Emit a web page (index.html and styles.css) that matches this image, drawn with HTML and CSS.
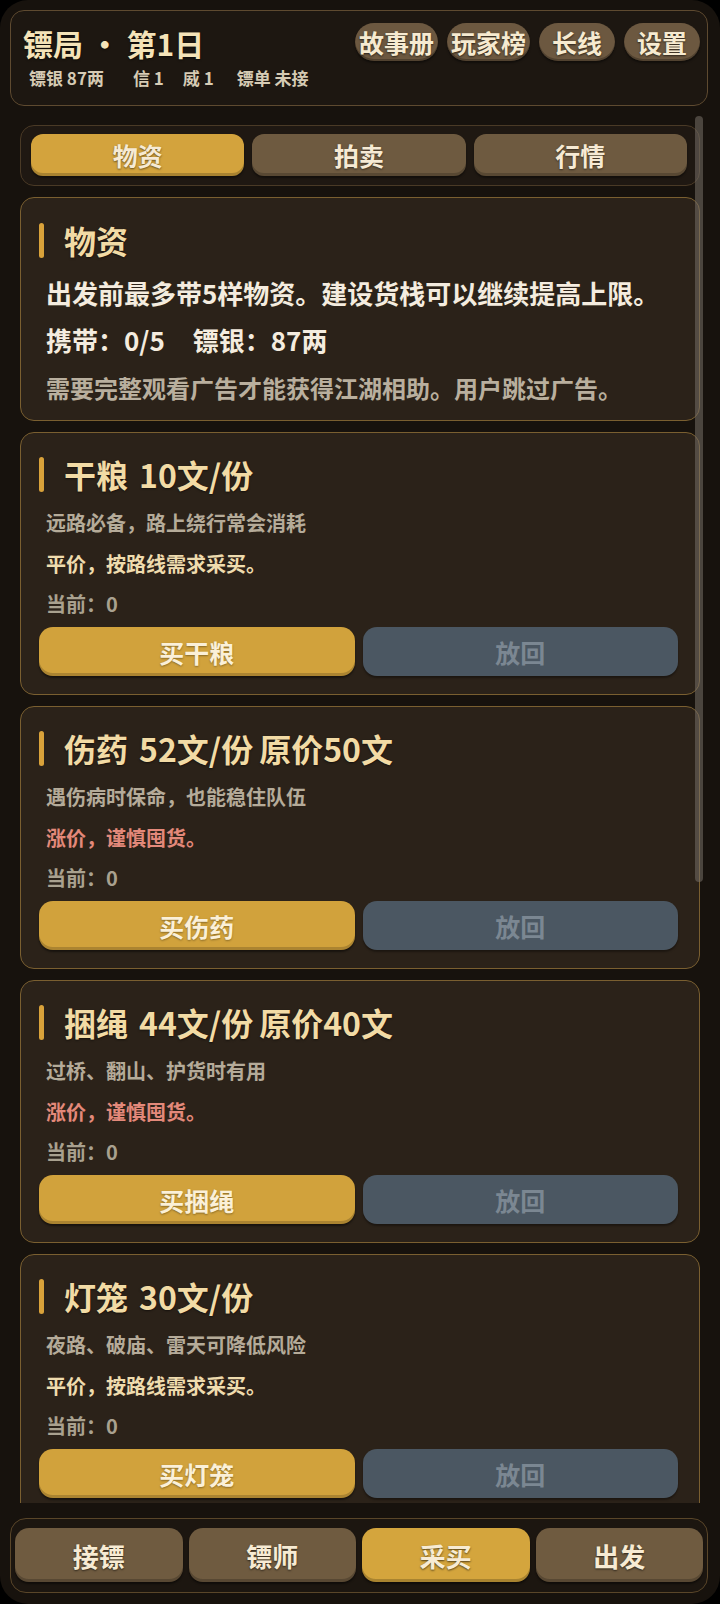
FILE: index.html
```html
<!DOCTYPE html>
<html lang="zh-CN">
<head>
<meta charset="utf-8">
<title>镖局</title>
<link rel="stylesheet" href="styles.css">
</head>
<body>
<div class="app">
  <header class="top">
    <div class="top-left">
      <div class="game-title">镖局 · 第1日</div>
      <div class="stats"><span>镖银 87两</span><span class="g1">信 1</span><span class="g2">威 1</span><span class="g3">镖单 未接</span></div>
    </div>
    <div class="top-actions">
      <button class="pill tight">故事册</button>
      <button class="pill tight">玩家榜</button>
      <button class="pill">长线</button>
      <button class="pill">设置</button>
    </div>
  </header>

  <main class="scroll">
    <div class="scroll-content">
      <nav class="tabs">
        <button class="tab active">物资</button>
        <button class="tab">拍卖</button>
        <button class="tab">行情</button>
      </nav>

      <section class="card intro">
        <div class="card-title"><span class="bar"></span><span>物资</span></div>
        <p class="intro-main">出发前最多带5样物资。建设货栈可以继续提高上限。</p>
        <p class="intro-main intro-row"><span>携带：0/5</span><span class="sep">镖银：87两</span></p>
        <p class="intro-note">需要完整观看广告才能获得江湖相助。用户跳过广告。</p>
      </section>

      <section class="card item">
        <div class="card-title"><span class="bar"></span><span><span>干粮</span><span class="price">10文/份</span></span></div>
        <p class="desc">远路必备，路上绕行常会消耗</p>
        <p class="note">平价，按路线需求采买。</p>
        <p class="cur">当前：0</p>
        <div class="actions"><button class="btn buy">买干粮</button><button class="btn back">放回</button></div>
      </section>

      <section class="card item">
        <div class="card-title"><span class="bar"></span><span><span>伤药</span><span class="price">52文/份</span><span class="orig">原价50文</span></span></div>
        <p class="desc">遇伤病时保命，也能稳住队伍</p>
        <p class="note up">涨价，谨慎囤货。</p>
        <p class="cur">当前：0</p>
        <div class="actions"><button class="btn buy">买伤药</button><button class="btn back">放回</button></div>
      </section>

      <section class="card item">
        <div class="card-title"><span class="bar"></span><span><span>捆绳</span><span class="price">44文/份</span><span class="orig">原价40文</span></span></div>
        <p class="desc">过桥、翻山、护货时有用</p>
        <p class="note up">涨价，谨慎囤货。</p>
        <p class="cur">当前：0</p>
        <div class="actions"><button class="btn buy">买捆绳</button><button class="btn back">放回</button></div>
      </section>

      <section class="card item">
        <div class="card-title"><span class="bar"></span><span><span>灯笼</span><span class="price">30文/份</span></span></div>
        <p class="desc">夜路、破庙、雷天可降低风险</p>
        <p class="note">平价，按路线需求采买。</p>
        <p class="cur">当前：0</p>
        <div class="actions"><button class="btn buy">买灯笼</button><button class="btn back">放回</button></div>
      </section>
    </div>
    <div class="scroll-thumb"></div>
  </main>

  <footer class="bottom-nav">
    <button class="nav-btn">接镖</button>
    <button class="nav-btn">镖师</button>
    <button class="nav-btn active">采买</button>
    <button class="nav-btn">出发</button>
  </footer>
</div>
</body>
</html>
```

FILE: styles.css
```css
* { box-sizing: border-box; margin: 0; padding: 0; }

html, body {
  width: 720px;
  height: 1604px;
  background: #000;
  overflow: hidden;
}

body {
  font-family: "Noto Sans CJK SC", "Noto Sans", sans-serif;
  font-weight: 700;
  color: #f3e6cc;
}

button {
  font-family: inherit;
  font-weight: 700;
  border: none;
  cursor: pointer;
}

.app {
  width: 720px;
  height: 1604px;
  background: #17120d;
  border-radius: 28px;
  display: flex;
  flex-direction: column;
  overflow: hidden;
}

/* ---------- header ---------- */
.top {
  margin: 10px 12px 0 10px;
  height: 96px;
  flex: none;
  border: 1px solid #5e4a30;
  border-radius: 14px;
  background: #1d1711;
  display: flex;
  justify-content: space-between;
  align-items: flex-start;
  padding: 12px 7px 0 12px;
}

.game-title {
  font-size: 30px;
  line-height: 40px;
  color: #f4e3b8;
  text-shadow: 0 1px 2px rgba(0,0,0,.6);
}

.stats {
  margin-top: 3px;
  padding-left: 6px;
  display: flex;
  font-size: 17px;
  line-height: 24px;
  color: #d6cbb4;
}

.stats .g1 { margin-left: 29px; }
.stats .g2 { margin-left: 19px; }
.stats .g3 { margin-left: 23px; }

.top-actions {
  display: flex;
  gap: 9px;
}

.pill {
  height: 38px;
  border-radius: 19px;
  padding: 0 13px;
  background: #6c5840;
  color: #f6ead0;
  font-size: 25px;
  line-height: 38px;
  text-shadow: 0 1px 2px rgba(0,0,0,.6);
  box-shadow: inset 0 -2px 0 rgba(0,0,0,.25), 0 2px 2px rgba(0,0,0,.4);
}

.pill.tight { padding: 0 4px; }

/* ---------- scroll area ---------- */
.scroll {
  flex: 1;
  margin-top: 10px;
  position: relative;
  overflow: hidden;
}

.scroll-content {
  padding: 9px 20px 0 20px;
}

.scroll-thumb {
  position: absolute;
  right: 17px;
  top: 0;
  width: 8px;
  height: 766px;
  border-radius: 4px;
  background: rgba(118, 112, 104, 0.55);
}

/* ---------- tabs ---------- */
.tabs {
  display: flex;
  gap: 8px;
  border: 1px solid #4a3a26;
  border-radius: 14px;
  background: #1f1812;
  padding: 8px 12px 9px 10px;
}

.tab {
  flex: 1;
  height: 42px;
  border-radius: 12px;
  background: #6e5a40;
  color: #f6ead4;
  font-size: 25px;
  text-shadow: 0 1px 2px rgba(0,0,0,.5);
  box-shadow: inset 0 -3px 0 rgba(0,0,0,.2), 0 2px 2px rgba(0,0,0,.4);
}

.tab.active { background: #d3a33d; }

/* ---------- cards ---------- */
.card {
  margin-top: 11px;
  border: 1px solid #7a5f30;
  border-radius: 14px;
  background: #2b2219;
}

.card-title {
  display: flex;
  align-items: center;
  gap: 20px;
  height: 36px;
  font-size: 32px;
  line-height: 36px;
  color: #f2dba5;
  text-shadow: 0 1px 2px rgba(0,0,0,.5);
}

.card-title .price { margin-left: 11px; }
.card-title .orig { margin-left: 6px; }

.bar {
  width: 5px;
  height: 35px;
  border-radius: 3px;
  background: #d9a23a;
  flex: none;
}

.intro {
  padding: 24px 20px 16px 18px;
}

.intro-main {
  margin-top: 18px;
  padding-left: 7px;
  font-size: 26px;
  line-height: 34px;
  color: #f4ecdf;
}

.intro-row {
  margin-top: 13px;
}

.intro-row .sep { margin-left: 28px; }

.intro-note {
  margin-top: 15px;
  padding-left: 7px;
  font-size: 24px;
  line-height: 32px;
  color: #b9af9e;
}

.item {
  padding: 23px 21px 18px 18px;
}

.desc, .note, .cur {
  padding-left: 7px;
  font-size: 20px;
  line-height: 28px;
}

.desc { margin-top: 17px; color: #b5ab99; }
.note { margin-top: 13px; color: #efdcae; }
.note.up { color: #e3897a; }
.cur { margin-top: 12px; color: #a9a18f; }

.actions {
  margin-top: 9px;
  display: grid;
  grid-template-columns: 1fr 1fr;
  gap: 8px;
}

.btn {
  height: 49px;
  border-radius: 14px;
  font-size: 25px;
}

.btn.buy {
  background: #d1a23c;
  color: #fbf0d8;
  text-shadow: 0 1px 2px rgba(0,0,0,.35);
  box-shadow: inset 0 -3px 0 rgba(0,0,0,.18), 0 2px 2px rgba(0,0,0,.45);
}

.btn.back {
  background: #4b5762;
  color: #7b8792;
  box-shadow: 0 2px 2px rgba(0,0,0,.35);
}

/* ---------- bottom nav ---------- */
.bottom-nav {
  flex: none;
  margin: 15px 12px 11px 10px;
  height: 75px;
  border: 1px solid #5a4629;
  border-radius: 16px;
  background: #1c1610;
  padding: 9px 4px 10px 4px;
  display: flex;
  gap: 6px;
}

.nav-btn {
  flex: 1;
  height: 54px;
  border-radius: 14px;
  background: #6f5b40;
  color: #f7ebd3;
  font-size: 26px;
  text-shadow: 0 1px 2px rgba(0,0,0,.6);
  box-shadow: inset 0 -3px 0 rgba(0,0,0,.2), 0 2px 2px rgba(0,0,0,.45);
}

.nav-btn.active { background: #d4a53d; }
```
